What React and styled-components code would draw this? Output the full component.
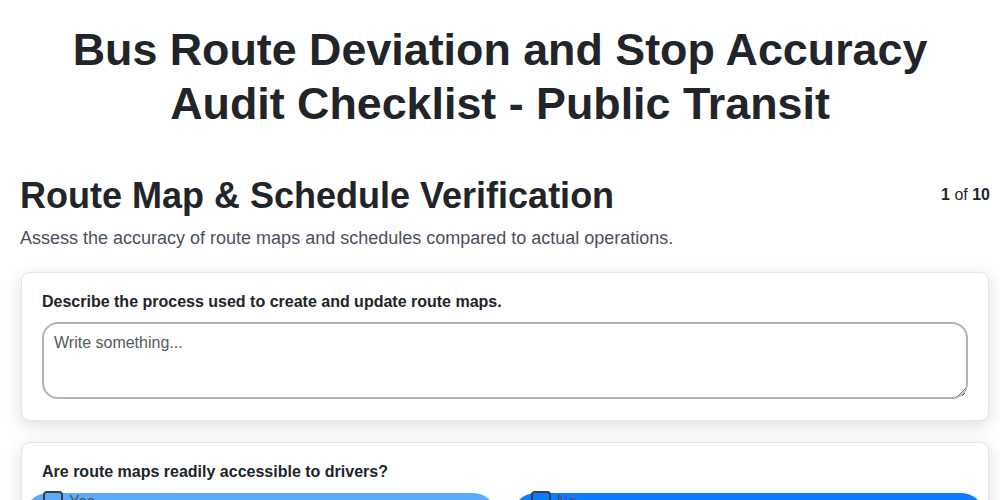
import styled, { createGlobalStyle } from "styled-components"

const GlobalStyle = createGlobalStyle`
    body {
        margin: 0;
        background: #ffffff;
        font-family: "Liberation Sans", Arial, sans-serif;
        color: #212529;
    }
`

const Page = styled.div`
    display: flex;
    flex-direction: column;
`

const Title = styled.h1`
    margin: 23px 0 0;
    padding: 0 60px;
    text-align: center;
    font-size: 44.8px;
    line-height: 1.2;
    font-weight: 700;
    color: #212529;
`

const Section = styled.section`
    display: flex;
    flex-direction: column;
    padding: 43px 10px 0 20px;
`

const SectionHeader = styled.div`
    display: flex;
    justify-content: space-between;
    align-items: flex-start;
`

const SectionTitle = styled.h2`
    margin: 0;
    font-size: 36px;
    line-height: 1.2;
    font-weight: 700;
    color: #212529;
`

const Counter = styled.div`
    padding-top: 12px;
    font-size: 16px;
    color: #212529;

    b {
        font-weight: 700;
    }
`

const SectionDescription = styled.p`
    margin: 11px 0 23px;
    font-size: 18px;
    line-height: 1.2;
    color: #4a5060;
`

const QuestionCard = styled.div`
    display: flex;
    flex-direction: column;
    padding: 20px 20px 21px;
    margin: 0 1px 21px;
    border: 1px solid #e4e4ea;
    border-radius: 9px;
    background: #ffffff;
    box-shadow: 0 4px 16px rgba(20, 20, 40, 0.15);
`

const QuestionLabel = styled.label`
    font-size: 16px;
    line-height: 1.15;
    font-weight: 700;
    color: #212529;
`

const TextArea = styled.textarea`
    display: block;
    box-sizing: border-box;
    width: 100%;
    height: 77px;
    margin-top: 10px;
    padding: 10px 10px;
    border: 2px solid #adb3bb;
    border-radius: 16px;
    font-family: "Liberation Sans", Arial, sans-serif;
    font-size: 16px;
    color: #212529;
    resize: vertical;

    &::placeholder {
        color: #555a60;
    }
`

const OptionGrid = styled.div`
    display: grid;
    grid-template-columns: 1fr 1fr;
    gap: 15px;
    margin: 12px -17px 0 -18px;
`

const OptionButton = styled.div`
    display: flex;
    align-items: flex-start;
    gap: 6px;
    height: 52px;
    padding: 0 19px;
    border-radius: 24px;
    background: ${(p) => (p.$active ? "#0a7cff" : "#5caafa")};
`

const CheckBox = styled.span`
    display: block;
    box-sizing: border-box;
    width: 20px;
    height: 20px;
    margin-top: -2px;
    border: 2px solid #3a3f47;
    border-radius: 4px;
    background: transparent;
`

const OptionText = styled.span`
    font-size: 16px;
    line-height: 18px;
    color: #4a5566;
`

const App = () => {
    return (
        <>
            <GlobalStyle />
            <Page>
                <Title>Bus Route Deviation and Stop Accuracy Audit Checklist - Public Transit</Title>
                <Section>
                    <SectionHeader>
                        <SectionTitle>Route Map &amp; Schedule Verification</SectionTitle>
                        <Counter>
                            <b>1</b> of <b>10</b>
                        </Counter>
                    </SectionHeader>
                    <SectionDescription>
                        Assess the accuracy of route maps and schedules compared to actual operations.
                    </SectionDescription>

                    <QuestionCard>
                        <QuestionLabel>Describe the process used to create and update route maps.</QuestionLabel>
                        <TextArea placeholder="Write something..." />
                    </QuestionCard>

                    <QuestionCard>
                        <QuestionLabel>Are route maps readily accessible to drivers?</QuestionLabel>
                        <OptionGrid>
                            <OptionButton>
                                <CheckBox />
                                <OptionText>Yes</OptionText>
                            </OptionButton>
                            <OptionButton $active>
                                <CheckBox />
                                <OptionText>No</OptionText>
                            </OptionButton>
                        </OptionGrid>
                    </QuestionCard>
                </Section>
            </Page>
        </>
    )
}

export default App
